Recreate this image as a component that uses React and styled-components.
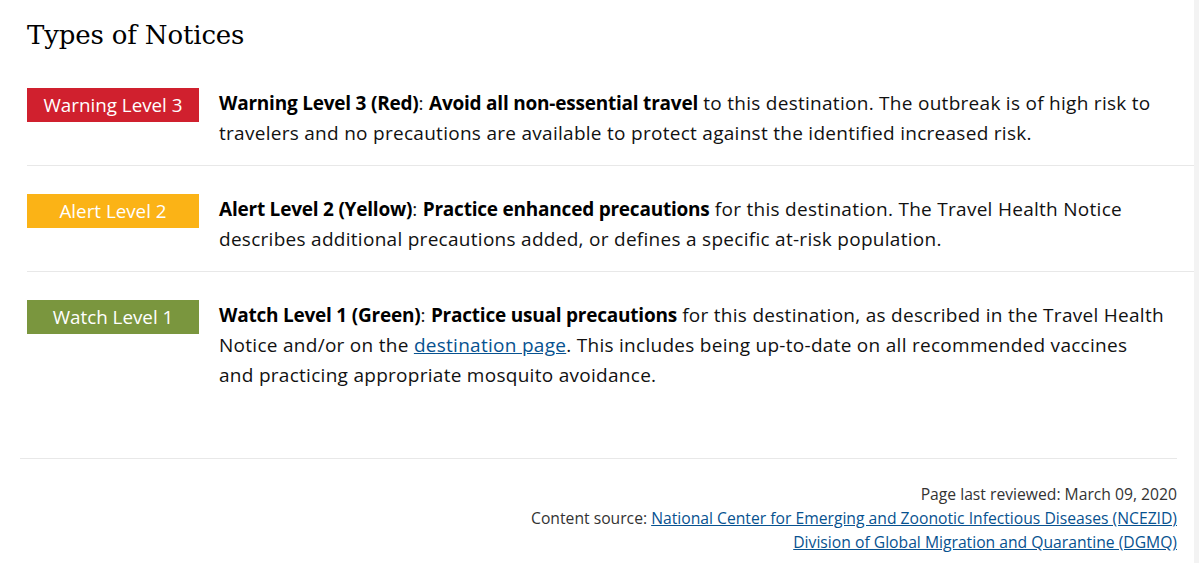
import React from 'react';
import styled, { createGlobalStyle } from 'styled-components';

const GlobalStyle = createGlobalStyle`
  body {
    margin: 0;
    background: #fff;
    font-family: "Open Sans", "Liberation Sans", sans-serif;
    color: #000;
  }
`;

const Page = styled.div`
  display: flex;
  min-height: 563px;
`;

const Main = styled.div`
  flex: 1;
  display: flex;
  flex-direction: column;
`;

const Strip = styled.div`
  width: 5px;
  background: #f3f3f3;
`;

const Content = styled.div`
  padding-left: 27px;
`;

const Title = styled.h1`
  margin: 16px 0 0;
  height: 72px;
  font-family: "DejaVu Serif", "Liberation Serif", serif;
  font-weight: 400;
  font-size: 26px;
  line-height: 38px;
  color: #000;
  letter-spacing: -0.15px;
`;

const Row = styled.div`
  display: flex;
  align-items: flex-start;
  gap: 20px;
  padding-bottom: ${(p) => (p.$last ? '0' : '17px')};
  margin-bottom: ${(p) => (p.$last ? '68px' : '28px')};
  border-bottom: ${(p) => (p.$last ? 'none' : '1px solid #e8e8e8')};
`;

const Badge = styled.div`
  flex: 0 0 172px;
  height: 34px;
  background: ${(p) => p.$color};
  color: #fff;
  font-size: 18.8px;
  line-height: 35px;
  text-align: center;
`;

const Text = styled.div`
  flex: 1;
  font-size: 19px;
  line-height: 30px;
  letter-spacing: 0.28px;
  color: #111;

  b {
    font-weight: 700;
    letter-spacing: -0.22px;
    color: #000;
  }
`;

const Line = styled.div`
  white-space: nowrap;
`;

const Link = styled.a`
  color: #075290;
  text-decoration: underline;
`;

const Footer = styled.div`
  margin: 0 17px 0 20px;
  border-top: 1px solid #e8e8e8;
  padding-top: 23px;
  text-align: right;
  font-size: 15.7px;
  line-height: 24px;
  color: #333;
`;

const FootLine = styled.div`
  white-space: nowrap;
`;

const notices = [
  {
    label: 'Warning Level 3',
    color: '#d0202e',
    lines: [
      <>
        <b>Warning Level 3 (Red)</b>: <b>Avoid all non-essential travel</b> to this destination. The outbreak is of high risk to
      </>,
      <>travelers and no precautions are available to protect against the identified increased risk.</>,
    ],
  },
  {
    label: 'Alert Level 2',
    color: '#fbb316',
    lines: [
      <>
        <b>Alert Level 2 (Yellow)</b>: <b>Practice enhanced precautions</b> for this destination. The Travel Health Notice
      </>,
      <>describes additional precautions added, or defines a specific at-risk population.</>,
    ],
  },
  {
    label: 'Watch Level 1',
    color: '#7a963e',
    lines: [
      <>
        <b>Watch Level 1 (Green)</b>: <b>Practice usual precautions</b> for this destination, as described in the Travel Health
      </>,
      <>
        Notice and/or on the <Link href="#">destination page</Link>. This includes being up-to-date on all recommended vaccines
      </>,
      <>and practicing appropriate mosquito avoidance.</>,
    ],
  },
];

const App = () => {
  return (
    <Page>
      <GlobalStyle />
      <Main>
        <Content>
          <Title>Types of Notices</Title>
          {notices.map((n, i) => (
            <Row key={n.label} $last={i === notices.length - 1}>
              <Badge $color={n.color}>{n.label}</Badge>
              <Text>
                {n.lines.map((line, j) => (
                  <Line key={j}>{line}</Line>
                ))}
              </Text>
            </Row>
          ))}
        </Content>
        <Footer>
          <FootLine>Page last reviewed: March 09, 2020</FootLine>
          <FootLine>
            Content source: <Link href="#">National Center for Emerging and Zoonotic Infectious Diseases (NCEZID)</Link>
          </FootLine>
          <FootLine>
            <Link href="#">Division of Global Migration and Quarantine (DGMQ)</Link>
          </FootLine>
        </Footer>
      </Main>
      <Strip />
    </Page>
  );
};

export default App;
